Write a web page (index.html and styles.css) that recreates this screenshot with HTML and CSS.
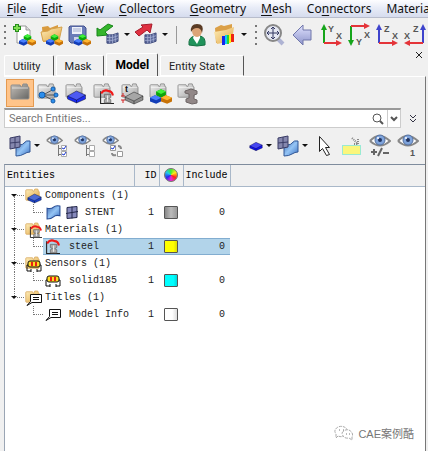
FILE: index.html
```html
<!DOCTYPE html>
<html lang="en">
<head>
    <meta charset="UTF-8">
    <meta name="viewport" content="width=device-width, initial-scale=1.0">
    <title>Model Browser</title>
    <link rel="stylesheet" href="styles.css">
</head>
<body>
    <!-- Shared icon shapes -->
    <svg class="defs" width="0" height="0" aria-hidden="true">
        <defs>
            <linearGradient id="g-gray" x2="1" y2="1"><stop stop-color="#f2f2f2"/><stop offset="1" stop-color="#a5a5a5"/></linearGradient>
            <linearGradient id="g-dark" x2="1" y2="1"><stop stop-color="#c5c0ba"/><stop offset="1" stop-color="#656563"/></linearGradient>
            <linearGradient id="g-gold" x2="1" y2="1"><stop stop-color="#fff0bd"/><stop offset="1" stop-color="#e0a544"/></linearGradient>
            <linearGradient id="g-blue" x2="1" y2="1"><stop stop-color="#3d68ae"/><stop offset=".5" stop-color="#94c4f5"/><stop offset="1" stop-color="#3c70c0"/></linearGradient>
            <linearGradient id="g-arrow" x2="0" y2="1"><stop stop-color="#e0e2ff"/><stop offset="1" stop-color="#8d94ca"/></linearGradient>
            <symbol id="folder" viewBox="0 0 20 18"><path d="M1 3q0-1 1-1h8l1 2h1l1-3h4l1 3q1 0 1 1v10q0 1-1 1H2q-1 0-1-1z" stroke="#8d8d8d"/><path d="M2 5h16" stroke="#fff" opacity=".6"/></symbol>
            <symbol id="folder-gold" viewBox="0 0 20 18"><path d="M1 3q0-1 1-1h8l1 2h1l1-3h4l1 3q1 0 1 1v10q0 1-1 1H2q-1 0-1-1z" fill="url(#g-gold)" stroke="#d5a65a"/></symbol>
            <symbol id="block" viewBox="0 0 20 14"><path d="M1 6 10 1l9 4v4l-9 4-9-4z" fill="currentColor"/><path d="M1 6 10 1l9 4-9 5z" fill="#fff" opacity=".22"/><path d="M1 6 10 1l9 4v4l-9 4-9-4zM1 6l9 4 9-5M10 10v3" fill="none" stroke="#000" opacity=".4"/></symbol>
            <symbol id="blocks" viewBox="0 0 18 12">
                <path d="M5 2l4-2 4 2v3L9 7 5 5z" fill="#0ba30c"/><path d="M5 2l4-2 4 2-4 2z" fill="#3ff03a"/>
                <path d="M0 7l4-2 5 2v3l-4 2-5-2z" fill="#123db8"/><path d="M0 7l4-2 5 2-4 2z" fill="#4a80ff"/>
                <path d="M9 7l4-2 5 2v3l-4 2-5-2z" fill="#c77208"/><path d="M9 7l4-2 5 2-4 2z" fill="#ffb732"/>
            </symbol>
            <symbol id="mesh" viewBox="0 0 14 14"><path d="M1 3q6 1 12-2v9q-6 3-12 2z" fill="#5a6798" stroke="#3e4a7c"/><path d="M4 3v9M7 3v9M10 2v9M1 6q6 1 12-2M1 9q6 1 12-2" fill="none" stroke="#aab4d8" stroke-width=".8"/></symbol>
            <symbol id="surface" viewBox="0 0 14 14"><path d="M1 3q4 1 6-1t6-1v9q-4-1-6 1t-6 2z" fill="url(#g-blue)" stroke="#264b94"/></symbol>
            <symbol id="grid" viewBox="0 0 14 14"><path d="M2 2l10-1v11L2 13z" fill="#8689bc" stroke="#24284b"/><path d="M7 1v12M1 8l12-2" stroke="#24284b"/></symbol>
            <symbol id="meshsurf" viewBox="0 0 22 22"><path d="M7 9q6 2 8-1t6-2v11q-3 0-6 2t-8 2z" fill="url(#g-blue)" stroke="#315796"/><path d="M1 3l10-2v11L1 14z" fill="#8587ae" stroke="#3a3c66"/><path d="M6 2v11M1 8l10-1" stroke="#3a3c66"/></symbol>
            <symbol id="eye" viewBox="0 0 22 14"><path d="M1 7q9-10 20 0-10 9-20 0" fill="#fff" stroke="#888" stroke-width="2"/><circle cx="11" cy="6" r="5" fill="#7fa4dc" stroke="#536f9e"/><circle cx="11" cy="6" r="2" fill="#223560"/><circle cx="9" cy="4" r="1" fill="#fff"/></symbol>
            <symbol id="specimen" viewBox="0 0 14 14"><path d="M1.500 2v11.500H14" fill="none" stroke="#222"/><path d="M2 4Q5 0 9 2q3 0 4 4" fill="none" stroke="#f01818" stroke-width="2"/><path d="M5 5h6v3l-2 1 2 1v3H5v-3l2-1-2-1z" fill="#aaa" stroke="#666" stroke-width=".7"/><path d="M8 6v6" stroke="#eee"/></symbol>
            <symbol id="sensor" viewBox="0 0 16 13"><path d="M3 6H1v6h4M13 6h2v6h-4M5 10v3M11 10v3" fill="none" stroke="#111"/><path d="M2 4q0-2 2-2h8q2 0 2 2v2q0 2-2 2H4q-2 0-2-2z" fill="#ffdc22" stroke="#111"/><path d="M5 3h2v4H5zM9 3h2v4H9z" fill="#e92016"/></symbol>
            <symbol id="note" viewBox="0 0 16 13"><path d="M4.500 1.500h11v8H6l-5 3 3.500-4z" fill="#fff" stroke="#111"/><path d="M7 4.500h6M7 6.500h6" stroke="#111"/></symbol>
            <symbol id="caret" viewBox="0 0 6 4"><path d="M0 0h6L3 3z" fill="#111"/></symbol>
            <symbol id="branch" viewBox="0 0 20 17"><path d="M12 8.500h8" stroke="#777" stroke-dasharray="1 1"/><path d="M6 7h6L9 10z" fill="#111"/></symbol>
            <symbol id="leaf" viewBox="0 0 38 17"><path d="M28.500 0v9M29 8.500h9" stroke="#777" stroke-dasharray="1 1"/></symbol>
            <symbol id="trunk" viewBox="0 0 20 17"><path d="M9.500 0v17" stroke="#777" stroke-dasharray="1 1"/></symbol>
        </defs>
    </svg>

    <nav class="menubar">
        <button><u>F</u>ile</button>
        <button><u>E</u>dit</button>
        <button><u>V</u>iew</button>
        <button><u>C</u>ollectors</button>
        <button><u>G</u>eometry</button>
        <button><u>M</u>esh</button>
        <button>Co<u>n</u>nectors</button>
        <button>Materials</button>
    </nav>

    <div class="toolbar">
        <span class="grip"></span>
        <button aria-label="New"><svg width="24" height="24"><path d="M5 3h9l4 4v13H5z" fill="#fff" stroke="#999"/><path d="M14 3v4h4" fill="#ddd" stroke="#999"/><path d="M5 1v8M1 5h8" stroke="#278f1c" stroke-width="4"/><path d="M5 2v6M2 5h6" stroke="#80df52" stroke-width="2"/><use href="#blocks" x="7" y="11" width="17" height="12"/></svg></button>
        <button aria-label="Open"><svg width="24" height="24"><path d="M2 4l6-1 2 2 8-3v15L3 19z" fill="#d99b3e"/><path d="M1 9l7-1 3-2 11-2-3 14H3z" fill="url(#g-gold)" stroke="#d5a14b"/><use href="#blocks" x="6" y="11" width="17" height="12"/></svg></button>
        <button aria-label="Save"><svg width="24" height="24"><path d="M2 3h14l2 2v15H3L1 18V4z" fill="#6a7cb8" stroke="#42518d"/><path d="M4 4h10v7H4z" fill="#eef1fa"/><path d="M6 14h9v6H6z" fill="#ccd2e9"/><path d="M5 6h8M5 8h8" stroke="#a3adcf"/><use href="#blocks" x="6" y="11" width="17" height="12"/></svg></button>
        <button class="wide" aria-label="Import"><svg width="24" height="24"><path d="M1 13V5l3 2 8-6 5 2-8 6 3 3z" fill="#35b52b" stroke="#18861a"/><use href="#mesh" x="10" y="8" width="13" height="15"/></svg><svg width="6" height="4"><use href="#caret"/></svg></button>
        <button class="wide" aria-label="Export"><svg width="24" height="24"><path d="M1 9l8-5-2-2 11-1-2 9-3-3-8 6z" fill="#df3040" stroke="#a71c2b"/><use href="#mesh" x="10" y="8" width="13" height="15"/></svg><svg width="6" height="4"><use href="#caret"/></svg></button>
        <span class="divider"></span>
        <button aria-label="User profiles"><svg width="24" height="24"><path d="M4 22q-1-8 6-9h5q6 1 5 9-8 2-16 0" fill="#20935b" stroke="#167143"/><path d="M9 12h6v3l-3 6-4-6z" fill="#fff"/><ellipse cx="12" cy="8" rx="5" ry="6" fill="#dca478"/><path d="M6 9Q5 1 12 1q8 0 5 9-1-5-5-5-4 0-6 4" fill="#5a3b24"/></svg></button>
        <button class="wide" aria-label="Results"><svg width="24" height="24"><path d="M2 5l6-3 3 1 8-2v17L3 20z" fill="#dba047"/><path d="M1 9l12-2 8-3-2 14-15 3z" fill="url(#g-gold)"/><path d="M9 13h3v9H9z" fill="#1724ed"/><path d="M12 12h2v9h-2z" fill="#10cdf5"/><path d="M14 12h2v9h-2z" fill="#26d33a"/><path d="M16 11h2v9h-2z" fill="#ffee1b"/><path d="M18 11h3v8h-3z" fill="#ee2415"/></svg><svg width="6" height="4"><use href="#caret"/></svg></button>
        <span class="grip second"></span>
        <button aria-label="Fit view"><svg width="24" height="24"><path d="M15 16l5 5" stroke="#aeb3d3" stroke-width="4"/><circle cx="10" cy="10" r="8" fill="#e5e8f3" stroke="#888" stroke-width="2"/><path d="M10 4v12M4 10h12M8 6l2-2 2 2M8 14l2 2 2-2M6 8l-2 2 2 2M14 8l2 2-2 2" fill="none" stroke="#333862"/></svg></button>
        <button aria-label="Previous view"><svg width="24" height="24"><path d="M2 12L12 2v5h8v10h-8v5z" fill="url(#g-arrow)" stroke="#7077aa"/></svg></button>
        <button aria-label="XY view"><svg width="24" height="24"><path d="M5 20V3" stroke="#16a51b" stroke-width="2"/><path d="M2 7l3-6 3 6z" fill="#16a51b"/><path d="M5 20h15" stroke="#e43439" stroke-width="2"/><path d="M17 17l6 3-6 3z" fill="#e43439"/><text x="9" y="9">Y</text><text x="17" y="16">X</text></svg></button>
        <button aria-label="Reverse XY view"><svg width="24" height="24"><path d="M4 3v17" stroke="#16a51b" stroke-width="2"/><path d="M1 17l3 6 3-6z" fill="#16a51b"/><path d="M4 3h16" stroke="#e43439" stroke-width="2"/><path d="M17 0l6 3-6 3z" fill="#e43439"/><text x="9" y="22">Y</text><text x="17" y="15">X</text></svg></button>
        <button aria-label="XZ view"><svg width="24" height="24"><path d="M4 20V3" stroke="#3e43cc" stroke-width="2"/><path d="M1 7l3-6 3 6z" fill="#3e43cc"/><path d="M4 20h16" stroke="#e43439" stroke-width="2"/><path d="M17 17l6 3-6 3z" fill="#e43439"/><text x="9" y="9">Z</text><text x="17" y="16">X</text></svg></button>
        <button aria-label="Reverse XZ view"><svg width="24" height="24"><path d="M20 20V3" stroke="#3e43cc" stroke-width="2"/><path d="M17 7l3-6 3 6z" fill="#3e43cc"/><path d="M20 20H4" stroke="#e43439" stroke-width="2"/><path d="M7 17l-6 3 6 3z" fill="#e43439"/><text x="10" y="9">Z</text><text x="1" y="16">X</text></svg></button>
    </div>

    <div class="tabs">
        <button class="tab">Utility</button>
        <button class="tab">Mask</button>
        <button class="tab active">Model</button>
        <button class="tab last">Entity State</button>
        <button class="close" aria-label="Close"><svg width="8" height="8"><path d="M1 1l6 6M7 1L1 7" stroke="#222"/></svg></button>
    </div>

    <main class="panel">
        <div class="views">
            <button class="selected" aria-label="All entities"><svg width="24" height="24"><use href="#folder" x="2" y="2" width="20" height="18" fill="url(#g-dark)"/></svg></button>
            <button aria-label="Includes"><svg width="24" height="24"><use href="#folder" x="1" y="2" width="19" height="17" fill="url(#g-gray)"/><path d="M7 14l11-6M7 14h13M7 14l11 6" stroke="#555"/><g fill="#2b8eed" stroke="#155ca8"><circle cx="6" cy="14" r="3"/><circle cx="17" cy="8" r="2"/><circle cx="20" cy="14" r="2"/><circle cx="17" cy="20" r="2"/></g></svg></button>
            <button aria-label="Components"><svg width="24" height="24"><use href="#folder" x="1" y="2" width="18" height="16" fill="url(#g-gray)"/><use href="#block" x="2" y="9" width="21" height="14" color="#1b2cf0"/></svg></button>
            <button aria-label="Materials"><svg width="24" height="24"><use href="#folder" x="1" y="2" width="18" height="16" fill="url(#g-gray)"/><use href="#specimen" x="7" y="8" width="15" height="15"/></svg></button>
            <button aria-label="Properties"><svg width="24" height="24"><use href="#folder" x="1" y="2" width="18" height="16" fill="url(#g-gray)"/><use href="#block" x="4" y="10" width="20" height="14" color="#8e8e8e"/><path d="M3 12v3M3 19v3M1 15h4M1 19h4" stroke="#d42020"/><text class="black" x="5" y="11">t</text></svg></button>
            <button aria-label="Assemblies"><svg width="24" height="24"><use href="#folder" x="1" y="2" width="18" height="16" fill="url(#g-gray)"/><use href="#blocks" x="2" y="8" width="22" height="15"/></svg></button>
            <button aria-label="Beam sections"><svg width="24" height="24"><use href="#folder" x="1" y="2" width="18" height="16" fill="url(#g-gray)"/><path d="M9 10l6-2 6 2v3l-3 1v4l3 1v3l-5 1-6-2v-3l3-1v-4l-4-1z" fill="#918787" stroke="#6d6565"/></svg></button>
        </div>

        <div class="search">
            <div class="search-box">
                <input type="text" placeholder="Search Entities..." aria-label="Search Entities">
                <button aria-label="Search"><svg width="14" height="14"><circle cx="6" cy="6" r="4" fill="none" stroke="#555"/><path d="M9 9l3 3" stroke="#555" stroke-width="2"/></svg></button>
                <button class="options" aria-label="Search options"><svg width="8" height="6"><path d="M1 1l3 3 3-3" fill="none" stroke="#555" stroke-width="2"/></svg></button>
            </div>
            <button class="more" aria-label="More"><svg width="8" height="9"><path d="M1 1l3 3 3-3M1 5l3 3 3-3" fill="none" stroke="#334"/></svg></button>
        </div>

        <div class="actions">
            <button aria-label="Elements and geometry"><svg width="24" height="24"><use href="#meshsurf" x="1" y="1" width="22" height="22"/></svg><svg width="6" height="4"><use href="#caret"/></svg></button>
            <button aria-label="Show all"><svg width="24" height="24"><use href="#eye" x="2" y="1" width="17" height="11"/><path d="M14.500 11v11M15 14.500h3M15 20.500h3" fill="none" stroke="#777"/><path d="M17.500 11.500h5v5h-5zM17.500 17.500h5v5h-5z" fill="#fff" stroke="#aaa"/><path d="M18 14l2 1 2-3M18 20l2 1 2-3" fill="none" stroke="#1735d0"/></svg></button>
            <button aria-label="Hide all"><svg width="24" height="24"><use href="#eye" x="2" y="1" width="17" height="11"/><path d="M14.500 11v11M15 14.500h3M15 20.500h3" fill="none" stroke="#777"/><path d="M17.500 11.500h5v5h-5zM17.500 17.500h5v5h-5z" fill="#fff" stroke="#aaa"/></svg></button>
            <button aria-label="Reverse"><svg width="24" height="24"><use href="#eye" x="2" y="1" width="17" height="11"/><path d="M10.500 11.500h5v5h-5zM17.500 17.500h5v5h-5z" fill="#fff" stroke="#999"/><path d="M11 14l2 1 2-3" fill="none" stroke="#1735d0"/><path d="M18 12q3 0 3 3M12 19q0 3 4 2" fill="none" stroke="#888" stroke-width="2"/></svg></button>
            <span class="spacer"></span>
            <button aria-label="Component"><svg width="16" height="24"><use href="#block" x="1" y="7" width="14" height="11" color="#1212ed"/></svg><svg width="6" height="4"><use href="#caret"/></svg></button>
            <button aria-label="Display type"><svg width="24" height="24"><use href="#meshsurf" x="1" y="1" width="22" height="22"/></svg><svg width="6" height="4"><use href="#caret"/></svg></button>
            <button aria-label="Select"><svg width="24" height="24"><path d="M7.500 2.500v15l3-3 4 7 3-1-4-7h4z" fill="#fff" stroke="#222"/></svg></button>
            <button aria-label="Isolate" disabled><svg width="24" height="24"><path d="M2.500 11.500h18v9h-18z" fill="#fbf67c" stroke="#3fe0ea" stroke-dasharray="1 1"/><path d="M12 4l6 6M18 5v5h-5" fill="none" stroke="#888" stroke-width="2" stroke-dasharray="1 1"/></svg></button>
            <button aria-label="Show or hide"><svg width="24" height="24"><use href="#eye" x="1" y="0" width="22" height="14"/><path d="M3 18h6M6 15v6M10 22l4-8M15 19h6" stroke="#666" stroke-width="2"/></svg></button>
            <button aria-label="Show one"><svg width="24" height="24"><use href="#eye" x="1" y="0" width="22" height="14"/><text x="14" y="22">1</text></svg></button>
        </div>

        <div class="browser">
            <table>
                <colgroup><col class="c-name"><col class="c-id"><col class="c-color"><col class="c-include"><col></colgroup>
                <thead>
                    <tr><th>Entities</th><th class="num">ID</th><th><span class="wheel"></span></th><th class="num">Include</th><th></th></tr>
                </thead>
                <tbody>
                    <tr>
                        <td><div class="node root"><svg width="20" height="17"><use href="#branch"/><path d="M9.500 10v7" stroke="#777" stroke-dasharray="1 1"/></svg><svg width="17" height="17"><use href="#folder-gold" x="0" y="1" width="15" height="14"/><use href="#block" x="2" y="6" width="15" height="11" color="#1b42c8"/></svg><span>Components (1)</span></div></td>
                        <td></td><td></td><td></td><td></td>
                    </tr>
                    <tr>
                        <td><div class="node"><svg width="38" height="17"><use href="#trunk" width="20" height="17"/><use href="#leaf"/></svg><div class="item"><svg width="16" height="17"><use href="#surface" x="1" y="1" width="15" height="15"/></svg><svg width="16" height="17"><use href="#grid" x="2" y="1" width="14" height="15"/></svg><span>STENT</span></div></div></td>
                        <td class="num">1</td><td><span class="swatch gray"></span></td><td class="num">0</td><td></td>
                    </tr>
                    <tr>
                        <td><div class="node root"><svg width="20" height="17"><use href="#trunk"/><use href="#branch"/></svg><svg width="17" height="17"><use href="#folder-gold" x="0" y="1" width="15" height="14"/><use href="#specimen" x="4" y="4" width="13" height="13"/></svg><span>Materials (1)</span></div></td>
                        <td></td><td></td><td></td><td></td>
                    </tr>
                    <tr class="current">
                        <td><div class="node"><svg width="38" height="17"><use href="#trunk" width="20" height="17"/><use href="#leaf"/></svg><div class="item"><svg width="16" height="17"><use href="#specimen" x="0" y="1" width="15" height="15"/></svg><span>steel</span></div></div></td>
                        <td class="num">1</td><td><span class="swatch yellow"></span></td><td class="num">0</td><td></td>
                    </tr>
                    <tr>
                        <td><div class="node root"><svg width="20" height="17"><use href="#trunk"/><use href="#branch"/></svg><svg width="17" height="17"><use href="#folder-gold" x="0" y="1" width="15" height="14"/><use href="#sensor" x="1" y="4" width="16" height="13"/></svg><span>Sensors (1)</span></div></td>
                        <td></td><td></td><td></td><td></td>
                    </tr>
                    <tr>
                        <td><div class="node"><svg width="38" height="17"><use href="#trunk" width="20" height="17"/><use href="#leaf"/></svg><div class="item"><svg width="16" height="17"><use href="#sensor" x="0" y="2" width="16" height="13"/></svg><span>solid185</span></div></div></td>
                        <td class="num">1</td><td><span class="swatch cyan"></span></td><td class="num">0</td><td></td>
                    </tr>
                    <tr>
                        <td><div class="node root"><svg width="20" height="17"><path d="M9.500 0v8" stroke="#777" stroke-dasharray="1 1"/><use href="#branch"/></svg><svg width="17" height="17"><use href="#folder-gold" x="0" y="1" width="15" height="14"/><use href="#note" x="1" y="4" width="16" height="13"/></svg><span>Titles (1)</span></div></td>
                        <td></td><td></td><td></td><td></td>
                    </tr>
                    <tr>
                        <td><div class="node"><svg width="38" height="17"><use href="#leaf"/></svg><div class="item"><svg width="16" height="17"><use href="#note" x="0" y="2" width="16" height="13"/></svg><span>Model Info</span></div></div></td>
                        <td class="num">1</td><td><span class="swatch white"></span></td><td class="num">0</td><td></td>
                    </tr>
                </tbody>
            </table>
        </div>
    </main>

    <div class="watermark">
        <svg width="20" height="16"><g fill="#fff" stroke="#aaa" stroke-dasharray="3 1"><path d="M4 11l-2 2v-4q-3-4 2-7 5-2 9 2v5q-4 4-9 2"/><path d="M8 8q2-4 7-3 5 3 3 7v3l-3-2q-6 1-7-5"/></g><path d="M5 5h1M9 5h1M12 9h1M15 9h1" stroke="#777"/></svg>
        <span>CAE案例酷</span>
    </div>
</body>
</html>
```
FILE: styles.css
```css
* {
    box-sizing: border-box;
}
body {
    font-family: Roboto, "Liberation Sans", sans-serif;
    font-size: 11px;
    color: #222;
    background-color: #f0f0f0;
    margin: 0;
    min-height: 100vh;
    display: flex;
    flex-direction: column;
    overflow: hidden;
}
button {
    font: inherit;
    color: inherit;
    background: none;
    border: none;
    padding: 0;
    flex-shrink: 0;
    display: flex;
    align-items: center;
}
svg {
    display: block;
    flex-shrink: 0;
}
svg text {
    font: bold 9px "Liberation Sans", sans-serif;
    fill: #555;
}
svg text.black {
    fill: #111;
}
.defs {
    position: absolute;
}
.menubar {
    display: flex;
    gap: 15px;
    height: 18px;
    padding-left: 7px;
    background: linear-gradient(#fdfdff, #e8ecf7 45%, #d6dcee);
    border-bottom: 1px solid #b8bdcc;
    font: 12px "Noto Sans", sans-serif;
    color: #111;
    overflow: hidden;
}
.menubar u {
    text-underline-offset: 2px;
}
.toolbar {
    display: flex;
    align-items: center;
    height: 33px;
    padding-left: 4px;
    gap: 4px;
    overflow: hidden;
}
.toolbar .wide {
    gap: 4px;
}
.grip {
    width: 2px;
    height: 20px;
    margin-right: 2px;
    background: repeating-linear-gradient(#777 0 2px, transparent 2px 6px);
    flex-shrink: 0;
}
.grip.second {
    margin-left: 4px;
}
.divider {
    width: 1px;
    height: 18px;
    margin: 0 4px;
    background-color: #999;
}
.tabs {
    display: flex;
    align-items: flex-end;
    gap: 2px;
    height: 25px;
    padding-left: 4px;
}
.tab {
    height: 21px;
    padding: 2px 12px 0 8px;
    border: 1px solid #fff;
    border-right: 1px solid #555;
    border-radius: 2px 2px 0 0;
}
.tab.active {
    height: 23px;
    padding: 0 8px;
    font-weight: bold;
    font-size: 12px;
    color: #000;
    border-bottom: none;
}
.tab.last {
    padding-right: 18px;
}
.close {
    align-self: flex-start;
    margin: 0 5px 0 auto;
}
.panel {
    flex: 1;
    display: flex;
    flex-direction: column;
    margin: 0 2px 0 4px;
    border-top: 1px solid #fff;
    border-right: 1px solid #777;
}
.views {
    display: flex;
    padding: 2px 0 1px 2px;
}
.views button {
    width: 28px;
    height: 28px;
    justify-content: center;
    border: 1px solid transparent;
}
.views .selected {
    background-color: #ffc48a;
    border-color: #e59a50;
}
.search {
    display: flex;
    align-items: center;
    height: 20px;
}
.search-box {
    flex: 1;
    display: flex;
    align-self: stretch;
    background-color: #fff;
    border: 1px solid #ccc;
    border-top: 2px solid #999;
}
.search input {
    flex: 1;
    min-width: 0;
    border: none;
    outline: none;
    padding: 0 4px;
    font: 11px Roboto, sans-serif;
}
.search input::placeholder {
    color: #777;
}
.options {
    padding: 0 2px;
    margin-left: 2px;
    border-left: 1px solid #ccc;
}
.more {
    padding: 0 8px;
}
.actions {
    display: flex;
    align-items: center;
    gap: 4px;
    height: 36px;
    padding: 0 5px 0 4px;
}
.actions button {
    gap: 2px;
}
.spacer {
    flex: 1;
}
.browser {
    flex: 1;
    background-color: #fff;
    border-top: 1px solid #7f8c9d;
    border-left: 1px solid #9aa5b4;
    font: 10px "Liberation Mono", monospace;
}
table {
    width: 100%;
    table-layout: fixed;
    border-collapse: collapse;
}
.c-name {
    width: 129px;
}
.c-id {
    width: 25px;
}
.c-color {
    width: 24px;
}
.c-include {
    width: 47px;
}
th {
    height: 21px;
    padding: 0 2px;
    background-color: #f0f0f0;
    border-right: 1px solid #a9b8c9;
    border-bottom: 1px solid #a9b8c9;
    text-align: left;
    font-weight: normal;
    color: #000;
}
th:last-child {
    border-right: none;
}
td {
    height: 17px;
    padding: 0;
}
th.num {
    text-align: right;
}
td.num {
    text-align: right;
    padding-right: 5px;
}
.wheel {
    display: block;
    width: 14px;
    height: 14px;
    margin: 0 auto;
    border-radius: 50%;
    background: conic-gradient(#3cf02c, #ffe91b, #ff2318, #ed25dc, #292ced, #22c9ee, #3cf02c);
    border: 1px solid #777;
}
.node {
    display: flex;
    align-items: center;
    height: 17px;
    white-space: nowrap;
}
.root span {
    margin-left: 3px;
}
.item {
    flex: 1;
    display: flex;
    align-items: center;
    gap: 2px;
    height: 17px;
    padding-left: 2px;
}
.item span {
    margin-left: 6px;
}
.item svg + svg + span {
    margin-left: 4px;
}
.current .item,
.current td:nth-child(2),
.current td:nth-child(3),
.current td:nth-child(4) {
    background-color: #b2d4ea;
    box-shadow: inset 0 1px #82add0, inset 0 -1px #82add0;
}
.swatch {
    display: block;
    width: 14px;
    height: 13px;
    margin: 0 auto;
    border: 1px solid #555;
    border-radius: 1px;
}
.gray {
    background: linear-gradient(90deg, #888, #bbb, #999);
}
.yellow {
    background: linear-gradient(90deg, #ffff00 70%, #dddd00);
}
.cyan {
    background: linear-gradient(90deg, #00ffff 70%, #00d5dc);
}
.white {
    background: linear-gradient(90deg, #fff 60%, #ddd);
}
/* Overlay on the lower corner of the browser */
.watermark {
    position: absolute;
    right: 14px;
    bottom: 10px;
    display: flex;
    align-items: center;
    gap: 4px;
    font: 11px "Liberation Sans", "Noto Sans CJK SC", sans-serif;
    color: #777;
}
```
